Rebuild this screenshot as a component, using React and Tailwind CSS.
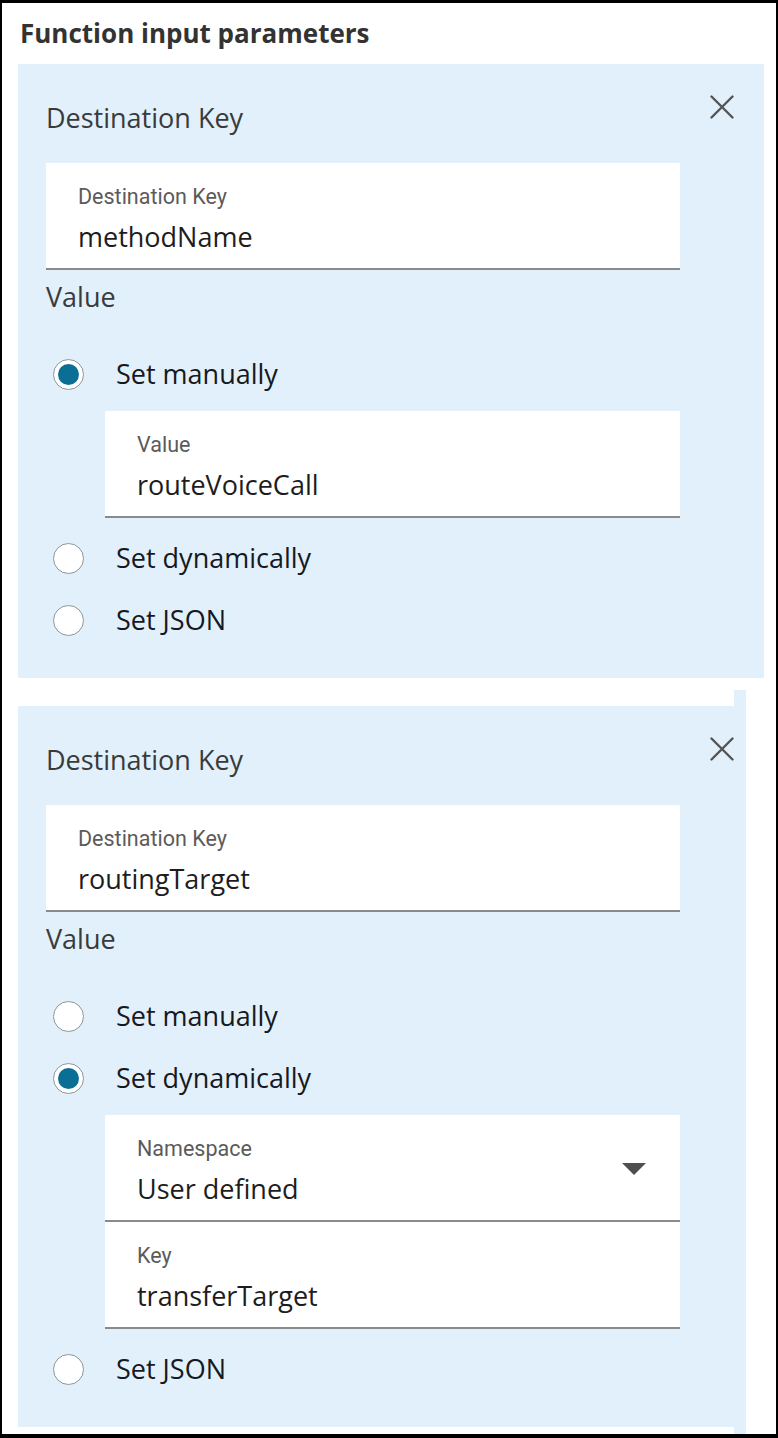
const ember = { fontFamily: '"Open Sans", "Noto Sans", sans-serif' };
const roboto = { fontFamily: 'Roboto, "Liberation Sans", sans-serif' };

function CloseIcon() {
  return (
    <svg width="24" height="24" viewBox="0 0 24 24">
      <path d="M1.5 1.5 L22.5 22.5 M22.5 1.5 L1.5 22.5" stroke="#545454" strokeWidth="2.4" strokeLinecap="round" />
    </svg>
  );
}

function Radio({ label, checked }) {
  return (
    <div className="h-[62px] flex items-center">
      <div className="ml-[7px] w-[31px] h-[31px] rounded-full border border-[#8d9699] bg-white flex items-center justify-center">
        {checked && <div className="w-[21px] h-[21px] rounded-full bg-[#0b6f95]" />}
      </div>
      <span className="ml-[32px] text-[27px] leading-[32px] text-[#16191f]" style={ember}>
        {label}
      </span>
    </div>
  );
}

function Field({ label, value, width, caret }) {
  return (
    <div
      className={`${width} h-[107px] bg-white border-b-2 border-[#8a8a8a] pl-[32px] pt-[23px] flex`}
    >
      <div className="flex-1">
        <div className="text-[21.5px] leading-[22px] text-[#5b5b5b]" style={roboto}>
          {label}
        </div>
        <div className="mt-[13px] text-[27px] leading-[32px] text-[#1d1d1d]" style={ember}>
          {value}
        </div>
      </div>
      {caret && (
        <svg width="24" height="12" viewBox="0 0 24 12" className="mt-[25px] mr-[34px]">
          <path d="M0 0 H24 L12 12 Z" fill="#4f4f4f" />
        </svg>
      )}
    </div>
  );
}

function ParamCard({ width, children }) {
  return (
    <div className={`${width} bg-[#e1f0fb] pl-[28px] pb-[27px]`}>
      <div className="w-[688px] h-[99px] flex justify-between">
        <div className="pt-[38px] text-[27px] leading-[32px] text-[#3a3a3a]" style={ember}>
          Destination Key
        </div>
        <div className="pt-[31px]">
          <CloseIcon />
        </div>
      </div>
      {children}
    </div>
  );
}

function ValueLabel() {
  return (
    <div className="pt-[11px] text-[27px] leading-[32px] text-[#3a3a3a]" style={ember}>
      Value
    </div>
  );
}

export default function App() {
  return (
    <div className="w-[778px] h-[1438px] bg-white border-black border-t-[3px] border-l-[2px] border-r-[2px] border-b-[4px] overflow-hidden">
      <h1
        className="h-[61px] pl-[18px] flex items-center text-[26px] font-bold text-[#333333]"
        style={ember}
      >
        Function input parameters
      </h1>

      <div className="ml-[16px]">
        <ParamCard width="w-[746px]">
          <Field width="w-[634px]" label="Destination Key" value="methodName" />
          <ValueLabel />
          <div className="mt-[30px]">
            <Radio label="Set manually" checked />
            <div className="ml-[59px] mt-[6px] mb-[9px]">
              <Field width="w-[575px]" label="Value" value="routeVoiceCall" />
            </div>
            <Radio label="Set dynamically" />
            <Radio label="Set JSON" />
          </div>
        </ParamCard>

        <div className="w-[728px] h-[28px] flex justify-end items-end">
          <div className="w-[12px] h-[16px] bg-[#e1f0fb]" />
        </div>

        <ParamCard width="w-[728px]">
          <Field width="w-[634px]" label="Destination Key" value="routingTarget" />
          <ValueLabel />
          <div className="mt-[30px]">
            <Radio label="Set manually" />
            <Radio label="Set dynamically" checked />
            <div className="ml-[59px] mt-[6px] mb-[9px]">
              <Field width="w-[575px]" label="Namespace" value="User defined" caret />
              <Field width="w-[575px]" label="Key" value="transferTarget" />
            </div>
            <Radio label="Set JSON" />
          </div>
        </ParamCard>

        <div className="w-[728px] h-[8px] flex justify-end">
          <div className="w-[12px] h-[8px] bg-[#e1f0fb]" />
        </div>
      </div>
    </div>
  );
}
